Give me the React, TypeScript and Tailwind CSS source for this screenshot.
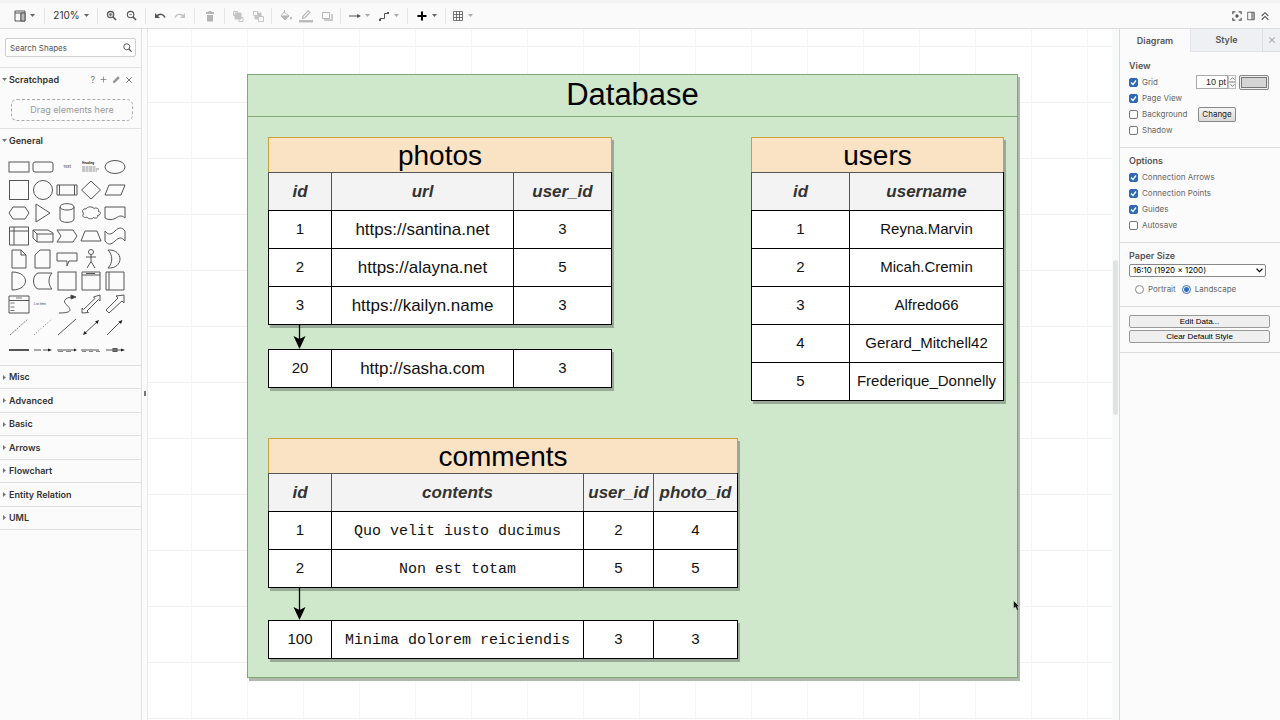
import type { ReactNode } from "react";

const MORE_SECTIONS = ["Misc", "Advanced", "Basic", "Arrows", "Flowchart", "Entity Relation", "UML"];

const COLS = {
  photos: ["w-[63px]", "w-[182px]", "w-[98px]"],
  users: ["w-[98px]", "w-[154px]"],
  comments: ["w-[63px]", "w-[252px]", "w-[70px]", "w-[84px]"],
};

// palette drawings, each on a 24x22 tile
const SHAPES: { name: string; art: ReactNode }[] = [
  { name: "Rectangle", art: <rect x="2" y="6" width="20" height="10" /> },
  { name: "Rounded Rectangle", art: <rect x="2" y="6" width="20" height="10" rx="2" /> },
  { name: "Text", art: <text x="12" y="12" fontSize="4" textAnchor="middle" fill="#333" stroke="none">Text</text> },
  {
    name: "Textbox",
    art: (
      <>
        <text x="3" y="8" fontSize="3" fontWeight="bold" fill="#222" stroke="none">Heading</text>
        <path d="M3 11h14M3 13h17M3 15h15" strokeWidth="0.7" stroke="#666" strokeDasharray="3 .5" />
      </>
    ),
  },
  { name: "Ellipse", art: <ellipse cx="12" cy="11" rx="10" ry="6.500" /> },
  { name: "Square", art: <rect x="2.500" y="1.500" width="19" height="19" /> },
  { name: "Circle", art: <circle cx="12" cy="11" r="9.500" /> },
  { name: "Process", art: <path d="M2 6h20v10H2zM4.500 6v10M19.500 6v10" /> },
  { name: "Diamond", art: <path d="M12 2l9.500 9-9.500 9-9.500-9z" /> },
  { name: "Parallelogram", art: <path d="M6 6h16l-4 10H2z" /> },
  { name: "Hexagon", art: <path d="M6 5h12l4 6-4 6H6l-4-6z" /> },
  { name: "Triangle", art: <path d="M5 2l14 9-14 9z" /> },
  { name: "Cylinder", art: <path d="M5 5v12c0 4.500 14 4.500 14 0V5c0-4.500-14-4.500-14 0c0 4 14 4 14 0" /> },
  { name: "Cloud", art: <path d="M7 7C4 6 2 10 5 11.500c-3 1.500 0 5.500 3 3.500 1 2.500 6 2 6.500.5 2.500 1.500 5 0 4-2 4-.5 3.500-4 1-4 1-3.500-3-4-4.500-3C13 4 8 4.500 7 7z" /> },
  { name: "Document", art: <path d="M2 5h20v11c-4-4-7-1-10 .5S5 18 2 16z" /> },
  { name: "Internal Storage", art: <path d="M2.500 2h19v18h-19zM2.500 6h19M7 2v18" /> },
  { name: "Cube", art: <path d="M2 5h15l5 3v9H6l-4-4zM2 5l4 4h16M6 9v8" /> },
  { name: "Step", art: <path d="M2 5h16l4 6-4 6H2l4-6z" /> },
  { name: "Trapezoid", art: <path d="M6 6h12l4 10H2z" /> },
  { name: "Tape", art: <path d="M2 6c3 4 6 4 10 0s7-4 10 0v10c-3-4-6-4-10 0s-7 4-10 0z" /> },
  { name: "Note", art: <path d="M5 2h9l5 5v13H5zM14 2v5h5" /> },
  { name: "Card", art: <path d="M9 2h10v18H4V7z" /> },
  { name: "Callout", art: <path d="M2 5h20v8H14l-2 5v-5H2z" /> },
  { name: "Actor", art: <><circle cx="12" cy="4" r="2.500" /><path d="M12 6.500v7M7 9h10M12 13.500l-4 6.500M12 13.500l4 6.500" /></> },
  { name: "Or", art: <path d="M5 2c16-1 16 19 0 18 5-5 5-13 0-18z" /> },
  { name: "And", art: <path d="M5 2c18 0 18 18 0 18z" /> },
  { name: "Data Storage", art: <path d="M7 3h14c-4 4-4 12 0 16H7C1 17 1 5 7 3z" /> },
  { name: "Container", art: <rect x="3" y="2" width="18" height="18" /> },
  { name: "Titled Container", art: <path d="M3 2h18v18H3zM3 5h18M7 3.500h9" /> },
  { name: "Horizontal Container", art: <path d="M3 2h18v18H3zM6 2v18" /> },
  { name: "List", art: <><path d="M2 3h20v17H2zM2 7.500h20" /><path d="M3.500 10h4M3.500 14h4M3.500 17.500h4M9 5h6" strokeWidth=".8" /></> },
  { name: "List Item", art: <text x="9" y="12" fontSize="3" textAnchor="middle" fill="#333" stroke="none">List Item</text> },
  { name: "Curve", art: <><path d="M4 20c19 0 8-7 6-10S12 4 18 4" /><path d="M16 2l5 2-5 2z" fill="#333" /></> },
  { name: "Bidirectional Arrow", art: <path d="M3 20v-5l1.500 1.500L16 5.500 14.500 4 21 2v6l-1.500-1.500L8 18l1.500 1.500z" /> },
  { name: "Arrow", art: <path d="M3 17L15 5l-2-2 8-1v8l-2-2L6 20z" /> },
  { name: "Dashed Line", art: <path d="M3 19L21 3" strokeDasharray="2 1" strokeWidth=".8" /> },
  { name: "Dotted Line", art: <path d="M3 19L21 3" strokeDasharray="1 2" strokeWidth=".8" /> },
  { name: "Line", art: <path d="M3 19L21 3" /> },
  { name: "Bidirectional Connector", art: <><path d="M5 18L19 5" /><path d="M4 19l1.500-4 2.500 2.500zM20 4l-4 1.500 2.500 2.500z" fill="#222" stroke="none" /></> },
  { name: "Directional Connector", art: <><path d="M4 19L18 5" /><path d="M19.500 4l-4 1.500 2.500 2.500z" fill="#222" stroke="none" /></> },
  { name: "Link", art: <path d="M2 10.500h20M2 11.500h20" /> },
  { name: "Connector with Label", art: <><path d="M3 11h7M12 11h7" /><path d="M17 9.500l4 1.500-4 1.500z" fill="#222" stroke="none" /></> },
  { name: "Connector with 2 Labels", art: <><path d="M2 11h18" /><path d="M3 12.500h5M11 12.500h5" strokeWidth=".7" /><path d="M19 9.500l3 1.500-3 1.500z" fill="#222" stroke="none" /></> },
  { name: "Connector with 3 Labels", art: <><path d="M2 11h18" /><path d="M3 12.500h4M10 12.500h4M17 12.500h4" strokeWidth=".7" /></> },
  { name: "Connector with Symbol", art: <><path d="M3 11h17" /><rect x="10" y="9.500" width="4" height="3" fill="#777" /><path d="M18 9.500l4 1.500-4 1.500z" fill="#222" stroke="none" /></> },
];

function Icon({ size = 12, className = "", children }: { size?: number; className?: string; children: ReactNode }) {
  return (
    <svg
      width={size}
      height={size}
      viewBox="0 0 12 12"
      fill="none"
      stroke="currentColor"
      className={`shrink-0 ${className}`}
    >
      {children}
    </svg>
  );
}

function Caret({ className = "text-[#666]" }: { className?: string }) {
  return (
    <svg width="5" height="3" viewBox="0 0 5 3" className={`shrink-0 ${className}`}>
      <path d="M0 0h5L2.500 3z" fill="currentColor" />
    </svg>
  );
}

function Tool({ label, children }: { label: string; children: ReactNode }) {
  return (
    <button aria-label={label} className="flex items-center gap-1">
      {children}
    </button>
  );
}

function Toolbar() {
  const group = "flex h-4 items-center justify-evenly border-r border-[#e4e4e4]";
  return (
    <header className="flex h-[29px] shrink-0 items-center border-t-3 border-b border-t-[#f3f3f3] border-b-[#dcdcdc] bg-[#fafafa] text-[#555]">
      <div className={`${group} w-[45px] pl-1`}>
        <Tool label="View">
          <Icon>
            <path d="M1 1h10v10H1zM1 3h10M7 3v8" />
            <path d="M7 3h4v8H7z" fill="#bbb" />
          </Icon>
          <Caret />
        </Tool>
      </div>
      <div className={`${group} w-[53px]`}>
        <button className="flex items-center gap-1 text-[10px] text-[#333]">
          210%
          <Caret />
        </button>
      </div>
      <div className={`${group} w-[48px]`}>
        <Tool label="Zoom In">
          <Icon size={11}>
            <circle cx="5" cy="5" r="3.500" fill="#ccc" strokeWidth="1.200" />
            <path d="M7.500 7.500l3.500 3.500" strokeWidth="1.600" />
            <path d="M3.500 5h3M5 3.500v3" strokeWidth=".8" />
          </Icon>
        </Tool>
        <Tool label="Zoom Out">
          <Icon size={11}>
            <circle cx="5" cy="5" r="3.500" strokeWidth="1.200" />
            <path d="M7.500 7.500l3.500 3.500" strokeWidth="1.600" />
            <path d="M3.500 5h3" strokeWidth=".8" />
          </Icon>
        </Tool>
      </div>
      <div className={`${group} w-[49px]`}>
        <Tool label="Undo">
          <Icon>
            <path d="M2.500 6.500C5 3.500 9 3.500 11 7.500" strokeWidth="1.500" />
            <path d="M1 3v5h5z" fill="currentColor" stroke="none" />
          </Icon>
        </Tool>
        <Tool label="Redo">
          <Icon className="text-[#c4c4c4]">
            <path d="M9.500 6.500C7 3.500 3 3.500 1 7.500" strokeWidth="1.500" />
            <path d="M11 3v5H6z" fill="currentColor" stroke="none" />
          </Icon>
        </Tool>
      </div>
      <div className={`${group} w-[30px]`}>
        <Tool label="Delete">
          <Icon className="text-[#b5b5b5]">
            <path d="M2 3h8v1H2zM3 5h6v6.500H3zM4.500 1h3v1h-3z" fill="currentColor" stroke="none" />
            <path d="M2 2.500h8" />
          </Icon>
        </Tool>
      </div>
      <div className={`${group} w-[47px] text-[#c4c4c4]`}>
        <Tool label="To Front">
          <Icon>
            <path d="M1.500 1.500h4v4h-4zM7 7.500h4v4H7z" />
            <path d="M3 3h6v6H3z" fill="currentColor" />
          </Icon>
        </Tool>
        <Tool label="To Back">
          <Icon>
            <path d="M3 3h6v6H3z" fill="currentColor" />
            <path d="M1.500 1.500h4v4h-4zM6.500 6.500h5v5h-5z" fill="#fafafa" />
          </Icon>
        </Tool>
      </div>
      <div className={`${group} w-[69px] text-[#b8b8b8]`}>
        <Tool label="Fill Color">
          <Icon>
            <path d="M4 2l5 4-4 4-4-4z" />
            <path d="M1 6h8l-4 4zM11 7c2 3-2 3 0 0z" fill="currentColor" />
            <path d="M4.500 3V0" />
          </Icon>
        </Tool>
        <Tool label="Line Color">
          <Icon size={14}>
            <path d="M3 8l.5-2L8 1.500 9.500 3 5 7.500z" />
            <path d="M0 10.500h12" strokeWidth="2" />
          </Icon>
        </Tool>
        <Tool label="Shadow">
          <Icon>
            <path d="M3 10h8V4" strokeWidth="2" stroke="#ccc" />
            <path d="M1.500 2.500h7v6h-7z" />
          </Icon>
        </Tool>
      </div>
      <div className={`${group} w-[67px]`}>
        <Tool label="Connection">
          <Icon>
            <path d="M0 6h10" />
            <path d="M8 4l4 2-4 2z" fill="currentColor" stroke="none" />
          </Icon>
          <Caret className="text-[#aaa]" />
        </Tool>
        <Tool label="Waypoints">
          <Icon>
            <path d="M2 10V8.500h4.500v-5H10" />
            <path d="M1 9h2v2H1zM9 2h2v2H9z" fill="currentColor" stroke="none" />
          </Icon>
          <Caret className="text-[#aaa]" />
        </Tool>
      </div>
      <div className={`${group} w-[38px] text-black`}>
        <Tool label="Insert">
          <Icon>
            <path d="M1.500 6h9M6 1.500v9" strokeWidth="2" />
          </Icon>
          <Caret />
        </Tool>
      </div>
      <div className="flex h-4 w-8 items-center justify-center">
        <Tool label="Table">
          <Icon>
            <path d="M1.500 1.500h9v9h-9zM1.500 4.500h9M1.500 7.500h9M4.500 1.500v9M7.500 1.500v9" strokeWidth=".8" />
          </Icon>
          <Caret className="text-[#aaa]" />
        </Tool>
      </div>
      <div className="ml-auto flex items-center gap-1 pr-[10px]">
        <Tool label="Fullscreen">
          <Icon size={10}>
            <path d="M1 4V1h3M8 1h3v3M11 8v3H8M4 11H1V8" strokeWidth="1.400" />
            <circle cx="6" cy="6" r="2" fill="currentColor" stroke="none" />
          </Icon>
        </Tool>
        <Tool label="Format">
          <Icon size={10}>
            <path d="M2 1.500h8v9H2zM7 1.500v9M8.500 1.500v9" />
          </Icon>
        </Tool>
        <Tool label="Collapse">
          <Icon size={10}>
            <path d="M2 6l4-4 4 4M2 10.500l4-4 4 4" strokeWidth="1.300" />
          </Icon>
        </Tool>
      </div>
    </header>
  );
}

function OpenHeading({ label, children }: { label: string; children?: ReactNode }) {
  return (
    <div className="flex h-6 shrink-0 items-center border-t border-[#e2e2e2] pr-2">
      <button className="flex items-center gap-[2px] pl-[2px] text-[9px] font-semibold text-[#333]">
        <Caret className="text-[#777]" />
        {label}
      </button>
      {children}
    </div>
  );
}

function Sidebar() {
  return (
    <nav className="flex w-[142px] shrink-0 flex-col border-r border-[#e2e2e2] bg-[#fbfbfb]">
      <div className="h-[38px] shrink-0 px-[5px] pt-[9px]">
        <div className="flex h-[19px] items-center rounded-xs border border-[#cfcfcf] bg-white pr-[3px] pl-1">
          <input
            aria-label="Search Shapes"
            placeholder="Search Shapes"
            className="min-w-0 flex-1 bg-transparent text-[8px] outline-none placeholder:text-[#555]"
          />
          <Icon size={9} className="text-[#555]">
            <circle cx="5" cy="5" r="4" strokeWidth="1.300" />
            <path d="M8 8l3.500 3.500" strokeWidth="1.600" />
          </Icon>
        </div>
      </div>
      <OpenHeading label="Scratchpad">
        <div className="ml-auto flex items-center gap-[5px] text-[#777]">
          <button aria-label="Help" className="text-[9px]">?</button>
          <button aria-label="Add">
            <Icon size={7}><path d="M6 1v10M1 6h10" strokeWidth="1.300" /></Icon>
          </button>
          <button aria-label="Edit">
            <Icon size={8}>
              <path d="M2 10l1-3 6-6 2 2-6 6z" fill="#999" />
            </Icon>
          </button>
          <button aria-label="Close">
            <Icon size={8}><path d="M2 2l8 8M10 2l-8 8" strokeWidth="1.500" /></Icon>
          </button>
        </div>
      </OpenHeading>
      <div className="h-[37px] shrink-0 pt-2 pr-2 pl-[11px]">
        <div className="flex h-[22px] items-center justify-center rounded-md border border-dashed border-[#aaa] text-[9px] text-[#999]">
          Drag elements here
        </div>
      </div>
      <OpenHeading label="General" />
      <div className="grid h-[213px] shrink-0 grid-cols-5 content-between pt-1 pr-[14px] pb-1 pl-[7px]">
        {SHAPES.map((s) => (
          <button key={s.name} aria-label={s.name} className="flex h-[22px] items-center justify-center">
            <svg width="24" height="22" viewBox="0 0 24 22" fill="none" stroke="#555">
              {s.art}
            </svg>
          </button>
        ))}
      </div>
      <div className="flex h-[165px] shrink-0 flex-col border-b border-[#e0e0e0]">
        {MORE_SECTIONS.map((name) => (
          <button
            key={name}
            className="flex flex-1 items-center gap-[3px] border-t border-[#e0e0e0] pl-[3px] text-[9px] font-semibold text-[#333]"
          >
            <svg width="3" height="5" viewBox="0 0 3 5">
              <path d="M0 0v5l3-2.500z" fill="#777" />
            </svg>
            {name}
          </button>
        ))}
      </div>
    </nav>
  );
}

function Rows({
  cols,
  head,
  rows,
  bodyClass = "",
}: {
  cols: string[];
  head?: string[];
  rows: string[][];
  bodyClass?: string;
}) {
  return (
    <table className="w-full table-fixed border-separate border-spacing-0 border-r border-b border-black bg-white text-center text-[#111]">
      <colgroup>
        {cols.map((c, i) => (
          <col key={i} className={c} />
        ))}
      </colgroup>
      {head && (
        <thead>
          <tr className="h-[38px] bg-[#f3f3f3] text-[17px] text-[#333] italic">
            {head.map((h) => (
              <th key={h} className="border-t border-l border-[#555] p-0 font-bold whitespace-nowrap">
                {h}
              </th>
            ))}
          </tr>
        </thead>
      )}
      <tbody>
        {rows.map((r) => (
          <tr key={r[0]} className="h-[38px] text-[15px]">
            {r.map((cell, i) => (
              <td
                key={i}
                className={`border-t border-l border-black p-0 whitespace-nowrap ${i === 1 ? bodyClass : ""}`}
              >
                {cell}
              </td>
            ))}
          </tr>
        ))}
      </tbody>
    </table>
  );
}

function Entity({ title, place, children }: { title: string; place: string; children: ReactNode }) {
  return (
    <section className={`absolute shadow-[2px_3px_0_#98a997] ${place}`}>
      <h2 className="flex h-[35px] items-center justify-center border border-b-0 border-[#c8a040] bg-[#fae2c4] pt-px text-[28px] text-black">
        {title}
      </h2>
      {children}
    </section>
  );
}

function DownArrow({ place, length }: { place: string; length: number }) {
  return (
    <svg width="13" height={length} viewBox={`0 0 13 ${length}`} className={`absolute ${place}`}>
      <path d={`M6.500 0V${length - 8}`} stroke="#000" strokeWidth="1.300" />
      <path d={`M6.500 ${length}L.5 ${length - 13}l6 3 6-3z`} fill="#000" />
    </svg>
  );
}

function Canvas() {
  return (
    <main className="relative min-w-0 flex-1 overflow-hidden bg-white bg-[linear-gradient(to_right,#f6f6f6_1px,transparent_1px),linear-gradient(to_bottom,#f1f1f1_1px,transparent_1px)] bg-[size:56px_56px] bg-[position:43px_17px]">
      <section className="absolute top-[45px] left-[99px] h-[604px] w-[771px] border border-[#83a878] bg-[#cfe8cb] shadow-[2px_3px_0_#aeb9ab]">
        <h1 className="flex h-[42px] items-center justify-center border-b border-[#83a878] text-[31px] text-black">
          Database
        </h1>

        <Entity title="photos" place="top-[62px] left-[20px] w-[344px]">
          <Rows
            cols={COLS.photos}
            head={["id", "url", "user_id"]}
            rows={[
              ["1", "https://santina.net", "3"],
              ["2", "https://alayna.net", "5"],
              ["3", "https://kailyn.name", "3"],
            ]}
            bodyClass="pt-px text-[17px]"
          />
        </Entity>
        <div className="absolute top-[274px] left-[20px] w-[344px] shadow-[2px_3px_0_#98a997]">
          <Rows cols={COLS.photos} rows={[["20", "http://sasha.com", "3"]]} bodyClass="pt-px text-[17px]" />
        </div>
        <DownArrow place="top-[249px] left-[45px]" length={25} />

        <Entity title="users" place="top-[62px] left-[503px] w-[253px]">
          <Rows
            cols={COLS.users}
            head={["id", "username"]}
            rows={[
              ["1", "Reyna.Marvin"],
              ["2", "Micah.Cremin"],
              ["3", "Alfredo66"],
              ["4", "Gerard_Mitchell42"],
              ["5", "Frederique_Donnelly"],
            ]}
          />
        </Entity>

        <Entity title="comments" place="top-[363px] left-[20px] w-[470px]">
          <Rows
            cols={COLS.comments}
            head={["id", "contents", "user_id", "photo_id"]}
            rows={[
              ["1", "Quo velit iusto ducimus", "2", "4"],
              ["2", "Non est totam", "5", "5"],
            ]}
            bodyClass="pt-1 font-['Liberation_Mono',monospace]"
          />
        </Entity>
        <div className="absolute top-[545px] left-[20px] w-[470px] shadow-[2px_3px_0_#98a997]">
          <Rows
            cols={COLS.comments}
            rows={[["100", "Minima dolorem reiciendis", "3", "3"]]}
            bodyClass="pt-1 font-['Liberation_Mono',monospace]"
          />
        </div>
        <DownArrow place="top-[512px] left-[45px]" length={33} />

        {/* mouse pointer */}
        <svg width="7" height="11" viewBox="0 0 7 11" className="absolute top-[525px] left-[765px]">
          <path d="M.5.500v8l2-1.500 1.500 3.500 1.500-.5L4.500 6.500h2z" fill="#111" stroke="#dfeedd" strokeWidth=".5" />
        </svg>
      </section>
    </main>
  );
}

function Check({ label, on = false }: { label: string; on?: boolean }) {
  return (
    <label className="flex h-4 items-center gap-1">
      <span className="relative flex">
        <input
          type="checkbox"
          defaultChecked={on}
          className="peer size-[9px] appearance-none rounded-xs border border-[#777] bg-white checked:border-[#2f68b8] checked:bg-[#2f68b8]"
        />
        <svg
          viewBox="0 0 9 9"
          className="pointer-events-none absolute inset-0 hidden size-[9px] peer-checked:block"
        >
          <path d="M2 4.500l2 2L7 2.500" fill="none" stroke="#fff" strokeWidth="1.300" />
        </svg>
      </span>
      {label}
    </label>
  );
}

function FormatPanel() {
  const block = "border-b border-[#dedede] pl-[9px]";
  const title = "flex h-4 items-center text-[9px] font-semibold text-[#555]";
  const wide =
    "block h-[13px] w-full rounded-xs border border-[#999] bg-[#efefef] font-['Liberation_Sans',sans-serif] text-[8px] leading-[11px] text-black";
  return (
    <aside className="w-[161px] shrink-0 border-l border-[#d5d9da] bg-[#fbfbfb] text-[8px] text-[#666]">
      <div className="flex h-[23px] text-[9px] font-semibold text-[#555]">
        <button className="w-[70px]">Diagram</button>
        <button className="flex-1 border-b border-l border-[#e3e5e8] bg-[#eef0f3]">Style</button>
        <button
          aria-label="Close"
          className="flex w-[18px] items-center justify-center border-b border-l border-[#dcdfe2] bg-[#eef0f3] text-[#aaa]"
        >
          <Icon size={8}><path d="M2 2l8 8M10 2l-8 8" strokeWidth="1.600" /></Icon>
        </button>
      </div>

      <div className={`${block} h-[96px] pt-[6px]`}>
        <h3 className={title}>View</h3>
        <div className="flex h-4 items-center">
          <Check label="Grid" on />
          <div className="ml-auto flex items-center gap-[3px] pr-[11px]">
            <div className="flex">
              <input
                aria-label="Grid Size"
                defaultValue="10 pt"
                className="h-[14px] w-[32px] border border-[#aaa] bg-white pr-px text-right font-['Liberation_Sans',sans-serif] text-[9px] text-[#222]"
              />
              <span className="flex flex-col">
                <button aria-label="Increase" className="flex h-[7px] w-[8px] items-center justify-center border border-[#bbb]">
                  <Icon size={5}><path d="M1 9l5-5 5 5" strokeWidth="2" /></Icon>
                </button>
                <button aria-label="Decrease" className="flex h-[7px] w-[8px] items-center justify-center border border-[#bbb]">
                  <Icon size={5}><path d="M1 3l5 5 5-5" strokeWidth="2" /></Icon>
                </button>
              </span>
            </div>
            <button aria-label="Grid Color" className="h-[15px] w-[30px] rounded-xs border border-[#888] bg-[#eee] p-px">
              <span className="block h-full border border-[#777] bg-[#d5d5d5]" />
            </button>
          </div>
        </div>
        <Check label="Page View" on />
        <div className="flex h-4 items-center">
          <div className="w-[69px]">
            <Check label="Background" />
          </div>
          <button className="h-[15px] w-[38px] rounded-xs border border-[#888] bg-linear-to-b from-[#f4f4f4] to-[#d9d9d9] text-[8px] leading-[13px] text-[#222]">
            Change
          </button>
        </div>
        <Check label="Shadow" />
      </div>

      <div className={`${block} h-[95px] pt-[5px]`}>
        <h3 className={title}>Options</h3>
        <Check label="Connection Arrows" on />
        <Check label="Connection Points" on />
        <Check label="Guides" on />
        <Check label="Autosave" />
      </div>

      <div className={`${block} h-[64px] pt-[5px] pr-[14px]`}>
        <label htmlFor="paper" className={title}>Paper Size</label>
        <div className="relative">
          <select
            id="paper"
            defaultValue="wide"
            className="block h-[13px] w-full appearance-none rounded-xs border border-[#888] bg-white pl-[3px] text-[8px] leading-[11px] text-black"
          >
            <option value="wide">16:10 (1920 x 1200)</option>
          </select>
          <Icon size={7} className="pointer-events-none absolute top-[3px] right-[3px] text-black">
            <path d="M1 3l5 5 5-5" strokeWidth="2" />
          </Icon>
        </div>
        <div className="flex h-6 items-center gap-[6px] pl-[6px]">
          {["Portrait", "Landscape"].map((o) => (
            <label key={o} className="flex items-center gap-1">
              <input
                type="radio"
                name="orientation"
                defaultChecked={o === "Landscape"}
                className="size-[9px] appearance-none rounded-full border border-[#888] bg-white checked:border-[#2f6cc8] checked:bg-[radial-gradient(#2f6cc8_2px,#fff_3px)]"
              />
              {o}
            </label>
          ))}
        </div>
      </div>

      <div className={`${block} space-y-[2px] pt-2 pr-[10px] pb-[9px]`}>
        <button className={wide}>Edit Data...</button>
        <button className={wide}>Clear Default Style</button>
      </div>
    </aside>
  );
}

export default function App() {
  return (
    <div className="flex h-screen flex-col overflow-hidden bg-white font-['Liberation_Sans',sans-serif]">
      <div className="contents font-[Inter,sans-serif]">
        <Toolbar />
      </div>
      <div className="flex min-h-0 flex-1">
        <div className="flex font-[Inter,sans-serif]">
          <Sidebar />
          <div className="w-[6px] border-r border-[#e8e8e8] bg-[#fbfbfb] pt-[362px]">
            <div className="mx-auto h-[5px] w-[2px] bg-[#777]" />
          </div>
        </div>
        <Canvas />
        <div className="w-[7px] shrink-0 bg-[#f8f9f9] pt-[231px]">
          <div className="mx-auto h-[155px] w-[5px] rounded-full bg-[#e0e3e3]" />
        </div>
        <div className="flex font-[Inter,sans-serif]">
          <FormatPanel />
        </div>
      </div>
    </div>
  );
}
